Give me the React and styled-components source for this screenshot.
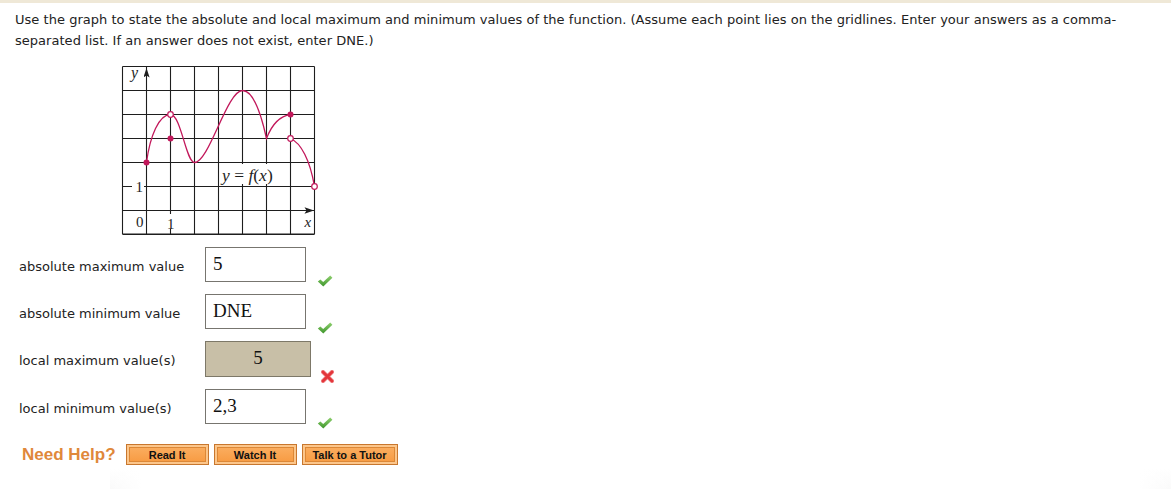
import styled, { createGlobalStyle } from 'styled-components';

const GlobalStyle = createGlobalStyle`
  html, body {
    margin: 0;
    padding: 0;
    background: #ffffff;
  }
  body {
    font-family: "DejaVu Sans", Verdana, sans-serif;
    color: #222;
  }
`;

const rows = [
  { label: 'absolute maximum value', value: '5', status: 'ok' },
  { label: 'absolute minimum value', value: 'DNE', status: 'ok' },
  { label: 'local maximum value(s)', value: '5', status: 'wrong' },
  { label: 'local minimum value(s)', value: '2,3', status: 'ok' },
];

const helpButtons = ['Read It', 'Watch It', 'Talk to a Tutor'];

const CURVE = '#c2185b';

const CheckIcon = () => (
  <svg width="16" height="12" viewBox="0 0 16 12">
    <defs>
      <linearGradient id="chk" x1="0" y1="0" x2="0" y2="1">
        <stop offset="0" stopColor="#8fd06f" />
        <stop offset="1" stopColor="#3e962c" />
      </linearGradient>
    </defs>
    <path d="M0.8 6.6 L3.4 4.4 L6.2 7.1 L13.2 0.6 L15.4 2.7 L6.3 11.4 Z" fill="url(#chk)" />
  </svg>
);

const CrossIcon = () => (
  <svg width="13" height="13" viewBox="0 0 13 13">
    <path d="M2 2 L11 11 M11 2 L2 11" stroke="#f08a8c" strokeWidth="4.2" strokeLinecap="round" />
    <path d="M2 2 L11 11 M11 2 L2 11" stroke="#e3363b" strokeWidth="2.8" strokeLinecap="round" />
  </svg>
);

const Graph = () => {
  const xs = Array.from({ length: 9 }, (_, i) => 122.5 + 24 * i);
  const ys = Array.from({ length: 8 }, (_, j) => 66.5 + 24 * j);
  return (
    <svg width="200" height="176" viewBox="118 62 200 176">
      <g stroke="#1e1e1e" strokeWidth="1.1">
        {xs.map((x) => (
          <line key={'v' + x} x1={x} y1={66.5} x2={x} y2={234} />
        ))}
        {ys.map((y) => (
          <line key={'h' + y} x1={122.5} y1={y} x2={314.5} y2={y} />
        ))}
        <line x1={122.5} y1={234} x2={314.5} y2={234} />
      </g>
      <path d="M146.5 68 L149.6 77.5 L146.5 75.5 L143.4 77.5 Z" fill="#1e1e1e" />
      <path d="M314 210.5 L304.5 207.3 L306.5 210.5 L304.5 213.7 Z" fill="#1e1e1e" />

      <g fontFamily='"Liberation Serif", serif' fill="#1e1e1e">
        <rect x="130" y="67.5" width="14" height="12" fill="#fff" />
        <text x="131" y="78" fontSize="16" fontStyle="italic">y</text>
        <text x="304.5" y="227" fontSize="15" fontStyle="italic">x</text>
        <text x="136" y="227" fontSize="15">0</text>
        <rect x="166" y="214" width="9" height="15" fill="#fff" />
        <text x="167" y="229" fontSize="15">1</text>
        <rect x="132" y="180" width="12" height="13" fill="#fff" />
        <text x="135.5" y="191.5" fontSize="15">1</text>
        <rect x="220.5" y="164" width="58" height="20" fill="#fff" />
        <text x="222" y="180.5" fontSize="17.5">
          <tspan fontStyle="italic">y</tspan>
          <tspan> = </tspan>
          <tspan fontStyle="italic">f</tspan>
          <tspan>(</tspan>
          <tspan fontStyle="italic">x</tspan>
          <tspan>)</tspan>
        </text>
      </g>

      <g fill="none" stroke={CURVE} strokeWidth="1.3">
        <path d="M146.5 162.5 C150 136 159 114.5 170.5 114.5 C181 114.5 186 162.5 194.5 162.5 C209 162.5 227 90.5 242.5 90.5 C254 90.5 262 118 266.5 138.5 C272 124 280 116 290.5 114.5" />
        <path d="M290.5 138.5 C301 143 310 160 314.5 186.5" />
      </g>
      <g fill={CURVE}>
        <circle cx="146.5" cy="162.5" r="3" />
        <circle cx="170.5" cy="138.5" r="3" />
        <circle cx="290.5" cy="114.5" r="3" />
      </g>
      <g fill="#fff" stroke={CURVE} strokeWidth="1.2">
        <circle cx="170.5" cy="114.5" r="2.8" />
        <circle cx="290.5" cy="138.5" r="2.8" />
        <circle cx="314.5" cy="186.5" r="2.8" />
      </g>
    </svg>
  );
};

const App = () => {
  return (
    <>
      <GlobalStyle />
      <Page>
        <Question>
          Use the graph to state the absolute and local maximum and minimum values of the function. (Assume each point lies on the gridlines. Enter your answers as a comma-separated list. If an answer does not exist, enter DNE.)
        </Question>
        <GraphWrap>
          <Graph />
        </GraphWrap>
        <AnswerList>
          {rows.map((row) => (
            <AnswerRow key={row.label}>
              <AnswerLabel>{row.label}</AnswerLabel>
              <AnswerBox $wrong={row.status === 'wrong'}>{row.value}</AnswerBox>
              <StatusMark $wrong={row.status === 'wrong'}>
                {row.status === 'wrong' ? <CrossIcon /> : <CheckIcon />}
              </StatusMark>
            </AnswerRow>
          ))}
        </AnswerList>
        <HelpRow>
          <HelpTitle>Need Help?</HelpTitle>
          {helpButtons.map((b) => (
            <HelpButton key={b} $wide={b.length > 10}>
              {b}
            </HelpButton>
          ))}
        </HelpRow>
        <FooterShade />
      </Page>
    </>
  );
};

export default App;

const Page = styled.div`
  width: 1171px;
  height: 489px;
  box-sizing: border-box;
  border-top: 3px solid #efe8d7;
  padding: 6px 0 0 15px;
  overflow: hidden;
`;

const Question = styled.p`
  margin: 0;
  width: 1110px;
  font-size: 13px;
  line-height: 21px;
  letter-spacing: 0.03px;
  color: #222;
`;

const GraphWrap = styled.div`
  margin: 11px 0 0 103px;
  height: 176px;

  & svg {
    display: block;
  }
`;

const AnswerList = styled.div`
  margin-top: 9px;
  display: flex;
  flex-direction: column;
  gap: 12px;
`;

const AnswerRow = styled.div`
  display: flex;
  align-items: flex-start;
  padding-left: 4px;
`;

const AnswerLabel = styled.div`
  width: 186px;
  align-self: center;
  padding-top: 3px;
  font-size: 13px;
  color: #222;
`;

const AnswerBox = styled.div`
  box-sizing: border-box;
  width: ${(p) => (p.$wrong ? '106px' : '101px')};
  height: ${(p) => (p.$wrong ? '36px' : '35px')};
  padding: 0 ${(p) => (p.$wrong ? '0' : '7px')} 2px;
  display: flex;
  align-items: center;
  justify-content: ${(p) => (p.$wrong ? 'center' : 'flex-start')};
  border: 1px solid ${(p) => (p.$wrong ? '#7d7868' : '#77756f')};
  background: ${(p) => (p.$wrong ? '#c8bfa7' : '#ffffff')};
  font-family: "Liberation Serif", "Times New Roman", serif;
  font-size: 19px;
  color: #111;
`;

const StatusMark = styled.div`
  align-self: flex-end;
  margin-left: ${(p) => (p.$wrong ? '10px' : '11px')};
  margin-bottom: ${(p) => (p.$wrong ? '-6px' : '-5px')};
  line-height: 0;
`;

const HelpRow = styled.div`
  margin-top: 20px;
  padding-left: 7px;
  display: flex;
  align-items: center;
  gap: 4px;
`;

const HelpTitle = styled.span`
  font-family: "Liberation Sans", Arial, sans-serif;
  font-weight: bold;
  font-size: 17px;
  color: #e0883a;
  margin-right: 6px;
`;

const HelpButton = styled.button`
  box-sizing: border-box;
  width: ${(p) => (p.$wide ? '96px' : '83px')};
  height: 21px;
  margin-right: 1px;
  padding: 0;
  border: 1px solid #c8772e;
  background: linear-gradient(#fbb064, #f7993f);
  box-shadow: inset 0 0 0 2px #fcc68b, inset 0 0 0 3px #dc8837;
  font-family: "Liberation Sans", Arial, sans-serif;
  font-weight: bold;
  font-size: 11px;
  color: #111;
  cursor: pointer;
`;

const FooterShade = styled.div`
  margin: 4px 0 0 95px;
  height: 20px;
  background: linear-gradient(90deg, transparent, #fff 3%, #fff 97%, transparent),
    linear-gradient(#ffffff, #fafafa);
  background-blend-mode: normal;
  opacity: 0.9;
`;
